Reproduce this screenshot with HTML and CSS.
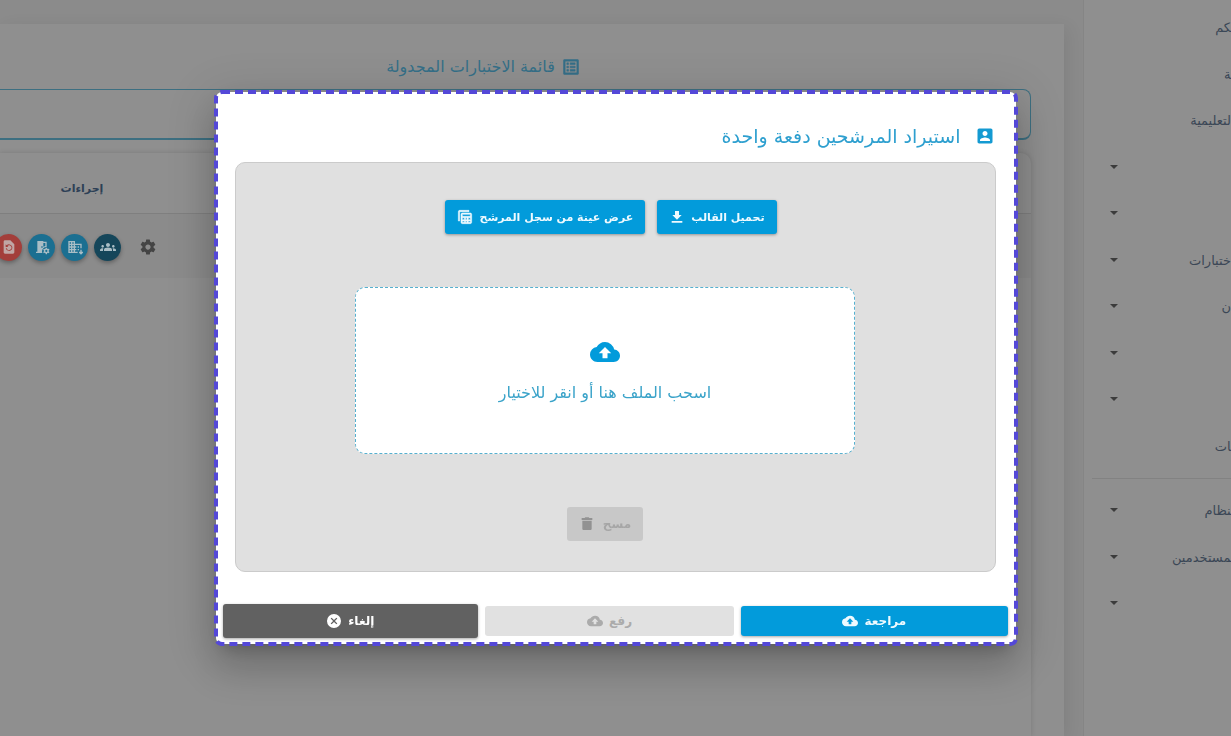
FILE: index.html
```html
<!DOCTYPE html>
<html lang="ar" dir="rtl">
<head>
<meta charset="utf-8">
<title>استيراد المرشحين دفعة واحدة</title>
<link rel="stylesheet" href="styles.css">
</head>
<body>
<div class="page">
  <nav class="sidebar">
    <ul class="menu">
      <li class="menu-item"><a href="#">&zwj;كم</a></li>
      <li class="menu-item"><a href="#">&zwj;ة</a></li>
      <li class="menu-item"><a href="#">لتعليمية</a></li>
      <li class="menu-item"><span class="caret"></span></li>
      <li class="menu-item"><span class="caret"></span></li>
      <li class="menu-item"><a href="#">ختبارات</a><span class="caret"></span></li>
      <li class="menu-item"><a href="#">ن</a><span class="caret"></span></li>
      <li class="menu-item"><span class="caret"></span></li>
      <li class="menu-item"><span class="caret"></span></li>
      <li class="menu-item"><a href="#">&zwj;ات</a></li>
    </ul>
    <ul class="menu menu-system">
      <li class="menu-item"><a href="#">&zwj;نظام</a><span class="caret"></span></li>
      <li class="menu-item"><a href="#">&zwj;مستخدمين</a><span class="caret"></span></li>
      <li class="menu-item"><span class="caret"></span></li>
    </ul>
  </nav>
  <main class="main">
    <section class="card">
      <h1 class="card-title">
        <svg class="icon-20" viewBox="0 0 24 24"><path d="M19 5v14H5V5h14m1.100-2H3.900c-.5 0-.9.4-.9.900v16.200c0 .4.4.9.9.9h16.200c.4 0 .9-.5.9-.9V3.900c0-.5-.5-.9-.9-.9zM11 7h6v2h-6V7zm0 4h6v2h-6v-2zm0 4h6v2h-6v-2zM7 7h2v2H7V7zm0 4h2v2H7v-2zm0 4h2v2H7v-2z" stroke="currentColor" stroke-width=".6"/></svg>
        <span>قائمة الاختبارات المجدولة</span>
      </h1>
      <div class="filter-box"></div>
      <div class="table-card">
        <table class="table">
          <thead><tr><td></td><th class="actions-col" scope="col">إجراءات</th></tr></thead>
          <tbody><tr><td></td><td class="actions-col">
            <div class="actions">
              <button class="round red" aria-label="استعادة"><svg viewBox="0 0 24 24"><path fill-rule="evenodd" d="M14 2H6c-1.100 0-2 .9-2 2v16c0 1.100.9 2 2 2h12c1.100 0 2-.9 2-2V8l-6-6zm-2 16a5 5 0 0 1-4.900-4h1.600a3.500 3.500 0 1 0 .9-3.400L11 12H7V8l1.500 1.500A5 5 0 1 1 12 18z"/></svg></button>
              <button class="round blue" aria-label="القاعة"><svg viewBox="0 0 24 24"><path d="M3 19V21h9.500a6 6 0 0 1-.5-2.500A6.500 6.500 0 0 1 18.500 12H19V4h-5V3H5v16H3zm8-8h2v2h-2v-2zm3-5h3v4.500l-3 1.300V6z"/><path fill-rule="evenodd" d="M17.600 13h1.800l.3 1.400 1.200.7 1.400-.5.9 1.600-1.100 1v1.400l1.100 1-.9 1.600-1.400-.5-1.200.7-.3 1.400h-1.800l-.3-1.400-1.200-.7-1.400.5-.9-1.600 1.100-1v-1.400l-1.100-1 .9-1.600 1.400.5 1.200-.7.300-1.400zm.9 3.300a1.600 1.600 0 1 0 0 3.200 1.600 1.600 0 0 0 0-3.200z"/></svg></button>
              <button class="round blue" aria-label="المركز"><svg viewBox="0 0 24 24"><path fill-rule="evenodd" d="M12 7V3H2v18h14v-2h-4v-2h2v-2h-2v-2h2v-2h-2V9h8v5h2V7H12zM6 19H4v-2h2v2zm0-4H4v-2h2v2zm0-4H4V9h2v2zm0-4H4V5h2v2zm4 12H8v-2h2v2zm0-4H8v-2h2v2zm0-4H8V9h2v2zm0-4H8V5h2v2zm8 4h-2v2h2v-2zm0 4h-2v2h2v-2zm2 1v3h-2v1.500l3 3 3-3V19h-2v-3h-2z"/></svg></button>
              <button class="round navy" aria-label="المرشحون"><svg viewBox="0 0 24 24"><path d="M12 12.750c1.630 0 3.070.390 4.240.9 1.080.480 1.760 1.560 1.760 2.730V18H6v-1.610c0-1.180.680-2.260 1.760-2.730 1.170-.520 2.610-.910 4.240-.910zM4 13c1.100 0 2-.9 2-2s-.9-2-2-2-2 .9-2 2 .9 2 2 2zm1.130 1.100C4.760 14.040 4.390 14 4 14c-.99 0-1.930.210-2.780.580C.480 14.900 0 15.620 0 16.430V18h4.500v-1.610c0-.830.230-1.610.630-2.290zM20 13c1.100 0 2-.9 2-2s-.9-2-2-2-2 .9-2 2 .9 2 2 2zm4 3.430c0-.810-.480-1.530-1.220-1.850A6.950 6.950 0 0 0 20 14c-.390 0-.760.040-1.130.100.4.680.630 1.460.630 2.290V18H24v-1.570zM12 6c1.660 0 3 1.340 3 3s-1.340 3-3 3-3-1.340-3-3 1.340-3 3-3z"/></svg></button>
              <button class="gear" aria-label="الإعدادات"><svg viewBox="0 0 24 24"><path d="M19.430 12.980c.040-.320.070-.640.070-.980s-.030-.660-.070-.980l2.110-1.650c.190-.150.240-.420.120-.640l-2-3.460c-.120-.220-.390-.300-.610-.220l-2.490 1c-.520-.4-1.080-.730-1.690-.980l-.380-2.650A.490.490 0 0 0 14 2h-4c-.250 0-.460.180-.490.420l-.380 2.650c-.610.250-1.170.590-1.690.980l-2.490-1c-.230-.090-.490 0-.610.220l-2 3.460c-.130.220-.070.490.120.640l2.110 1.650c-.040.320-.070.650-.070.980s.030.660.070.980l-2.110 1.650c-.190.150-.240.420-.120.640l2 3.460c.120.220.390.3.610.220l2.490-1c.520.4 1.080.730 1.690.980l.380 2.650c.030.240.240.420.490.420h4c.250 0 .460-.180.490-.420l.380-2.650c.610-.250 1.170-.590 1.690-.980l2.490 1c.230.090.490 0 .610-.220l2-3.460c.120-.220.070-.490-.120-.640l-2.110-1.650zM12 15.500c-1.930 0-3.500-1.570-3.500-3.500s1.570-3.500 3.500-3.500 3.500 1.570 3.500 3.500-1.570 3.500-3.500 3.500z"/></svg></button>
            </div>
          </td></tr></tbody>
        </table>
      </div>
    </section>
  </main>
</div>

<div class="scrim">
  <div class="dialog" role="dialog" aria-modal="true" aria-labelledby="dialog-title">
    <svg class="dialog-outline" aria-hidden="true"><rect width="100%" height="100%" rx="6"/></svg>
    <h2 class="dialog-title">
      <svg class="icon-20" viewBox="0 0 24 24"><path d="M3 5v14c0 1.100.890 2 2 2h14c1.100 0 2-.9 2-2V5c0-1.100-.9-2-2-2H5a2 2 0 0 0-2 2zm12 4c0 1.660-1.340 3-3 3s-3-1.340-3-3 1.340-3 3-3 3 1.340 3 3zm-9 8c0-2 4-3.100 6-3.100s6 1.100 6 3.100v1H6v-1z"/></svg>
      <span id="dialog-title">استيراد المرشحين دفعة واحدة</span>
    </h2>
    <div class="panel">
      <div class="template-buttons">
        <button class="btn primary"><span>تحميل القالب</span><svg class="icon-16" viewBox="0 0 24 24"><path d="M19 9h-4V3H9v6H5l7 7 7-7zM4 18v2.500h16V18H4z"/></svg></button>
        <button class="btn primary"><span>عرض عينة من سجل المرشح</span><svg class="icon-16" viewBox="0 0 24 24"><path fill-rule="evenodd" d="M18 2H4c-1.100 0-2 .9-2 2v14h2V4h14V2zM20 6H8c-1.100 0-2 .9-2 2v12c0 1.100.9 2 2 2h12c1.100 0 2-.9 2-2V8c0-1.100-.9-2-2-2zM8 8h12v3H8V8zm0 5h3v3H8v-3zm5 0h2v3h-2v-3zm4 0h3v3h-3v-3zm-9 5h3v2H8v-2zm5 0h2v2h-2v-2zm4 0h3v2h-3v-2z" stroke="currentColor" stroke-width=".8"/></svg></button>
      </div>
      <button class="dropzone">
        <svg class="icon-30" viewBox="0 0 24 24"><path d="M19.350 10.040A7.490 7.490 0 0 0 12 4C9.110 4 6.600 5.640 5.350 8.040A5.994 5.994 0 0 0 0 14c0 3.310 2.690 6 6 6h13c2.760 0 5-2.240 5-5 0-2.640-2.050-4.780-4.650-4.960zM14 13v4h-4v-4H7l5-5 5 5h-3z"/></svg>
        <span>اسحب الملف هنا أو انقر للاختيار</span>
      </button>
      <button class="btn clear" disabled><span>مسح</span><svg class="icon-16" viewBox="0 0 24 24"><path d="M5 19c0 1.100.9 2 2 2h10c1.100 0 2-.9 2-2V7H5v12zM20 3h-4.500l-1-1h-5l-1 1H4v3h16V3z"/></svg></button>
    </div>
    <div class="footer">
      <button class="btn primary review"><span>مراجعة</span><svg class="icon-16" viewBox="0 0 24 24"><path d="M19.350 10.040A7.490 7.490 0 0 0 12 4C9.110 4 6.600 5.640 5.350 8.040A5.994 5.994 0 0 0 0 14c0 3.310 2.690 6 6 6h13c2.760 0 5-2.240 5-5 0-2.640-2.050-4.780-4.650-4.960zM14 13v4h-4v-4H7l5-5 5 5h-3z"/></svg></button>
      <button class="btn upload" disabled><span>رفع</span><svg class="icon-16" viewBox="0 0 24 24"><path d="M19.350 10.040A7.490 7.490 0 0 0 12 4C9.110 4 6.600 5.640 5.350 8.040A5.994 5.994 0 0 0 0 14c0 3.310 2.690 6 6 6h13c2.760 0 5-2.240 5-5 0-2.640-2.050-4.780-4.650-4.960zM14 13v4h-4v-4H7l5-5 5 5h-3z"/></svg></button>
      <button class="btn cancel"><span>إلغاء</span><svg class="icon-16" viewBox="0 0 24 24"><path d="M12 1.500a10.500 10.500 0 1 0 0 21 10.500 10.500 0 0 0 0-21zM17 15.590 15.590 17 12 13.410 8.410 17 7 15.590 10.590 12 7 8.410 8.410 7 12 10.590 15.590 7 17 8.410 13.410 12 17 15.590z"/></svg></button>
    </div>
  </div>
</div>
</body>
</html>
```

FILE: styles.css
```css
* { box-sizing: border-box; }

body {
  margin: 0;
  overflow: hidden;
  background: #8e8e8e;
  font-family: "DejaVu Sans", sans-serif;
  font-size: 12px;
}

svg { display: block; flex: none; fill: currentColor; }
button { font: inherit; color: inherit; border: 0; padding: 0; }
h1, h2, ul { margin: 0; padding: 0; font-weight: 400; }

.icon-16 { width: 16px; height: 16px; }
.icon-20 { width: 20px; height: 20px; }
.icon-30 { width: 30px; height: 30px; }

.page { display: flex; height: 100vh; }

/* Sidebar */
.sidebar {
  flex: none;
  width: 148px;
  padding-top: 4px;
  border-left: 1px solid #858585;
  background: #8f8f8f;
}
.menu { list-style: none; }
.menu-system {
  margin: 9px 0 0 8px;
  padding-top: 8px;
  border-top: 1px solid #828282;
}
.menu-system .caret { margin-left: 18px; }
.menu-item {
  display: flex;
  align-items: center;
  height: 46px;
  font-size: 13px;
}
.menu-item:nth-child(even) { margin-top: 1px; }
.menu-item a { color: #3b4756; text-decoration: none; white-space: nowrap; }
.caret {
  margin: 0 auto 0 26px;
  border: 4px solid transparent;
  border-top-color: #3c3c3c;
  border-bottom: 0;
}

/* Page content */
.main {
  flex: 1;
  min-width: 0;
  padding: 24px 19px 0 0;
  background: #8b8b8b;
}
.card {
  display: flex;
  flex-direction: column;
  height: 100%;
  padding-right: 33px;
  background: #8f8f8f;
  box-shadow: 4px 4px 16px rgba(0, 0, 0, .08);
}
.card-title {
  display: flex;
  align-items: center;
  justify-content: center;
  gap: 6px;
  height: 65px;
  padding: 20px 64px 0 0;
  color: #356f88;
  font-size: 16px;
}
.filter-box {
  height: 51px;
  border: solid #3d6f81;
  border-width: 1px 1px 2px 0;
  border-radius: 0 8px 8px 0;
}
.table-card {
  flex: 1;
  margin-top: 13px;
  border-radius: 0 10px 0 0;
  box-shadow: 0 0 5px rgba(0, 0, 0, .15);
}
.table { width: 100%; border-collapse: collapse; table-layout: fixed; }
.table td, .table th { padding: 0; height: 60px; }
.table thead tr { border-bottom: 1px solid #7f7f7f; }
.table tbody td { height: 65px; padding-top: 3px; background: #8b8b8b; }
.table .actions-col { width: 164px; }
.table th { padding-top: 12px; font-size: 11px; color: #2d4056; text-align: center; }
.actions {
  direction: ltr;
  display: flex;
  align-items: center;
  gap: 6px;
  margin-left: -5px;
}
.actions svg { width: 16px; height: 16px; }
.round {
  display: grid;
  place-items: center;
  flex: none;
  width: 27px;
  height: 27px;
  border-radius: 50%;
  color: #a9bdc5;
  box-shadow: 0 2px 4px rgba(0, 0, 0, .3);
}
.red { background: #a33e3a; color: #c0a6a4; }
.blue { background: #1b6f91; }
.navy { background: #15465a; }
.gear { margin-left: 12px; background: none; color: #444; }
.gear svg { width: 18px; height: 18px; }

/* Dialog */
.scrim {
  position: fixed;
  inset: 0;
  display: flex;
  align-items: center;
  justify-content: center;
}
.dialog {
  position: relative;
  width: 800px;
  max-width: 100%;
  padding: 0 8px 6px 7px;
  border-radius: 6px;
  background: #fff;
  box-shadow: 0 11px 15px -7px rgba(0, 0, 0, .2), 0 24px 38px 3px rgba(0, 0, 0, .14), 0 9px 46px 8px rgba(0, 0, 0, .12);
}
.dialog-outline {
  position: absolute;
  inset: 0;
  width: 100%;
  height: 100%;
  overflow: visible;
  pointer-events: none;
}
.dialog-outline rect {
  fill: none;
  stroke: #5448d8;
  stroke-width: 4px;
  stroke-dasharray: 8 5;
}
.dialog-title {
  display: flex;
  align-items: center;
  gap: 14px;
  height: 70px;
  padding: 18px 13px 0 0;
  color: #2d9fcf;
  font-size: 19px;
}
.dialog-title svg { color: #149ad2; }
.panel {
  display: flex;
  flex-direction: column;
  align-items: center;
  margin: 0 12px;
  padding: 37px 20px 30px 0;
  border: 1px solid #cbcbcb;
  border-radius: 10px;
  background: #e0e0e0;
}
.template-buttons { display: flex; gap: 12px; padding-left: 12px; }
.btn {
  display: flex;
  align-items: center;
  justify-content: center;
  gap: 6px;
  height: 34px;
  padding: 0 12px;
  border-radius: 3px;
  font-size: 12px;
  font-weight: 700;
  white-space: nowrap;
}
.primary {
  background: #029bdb;
  color: #eefaff;
  box-shadow: 0 1px 3px rgba(0, 0, 0, .35);
}
.template-buttons .btn { font-size: 11px; }
.dropzone {
  display: flex;
  flex-direction: column;
  align-items: center;
  justify-content: center;
  gap: 16px;
  width: 500px;
  max-width: 100%;
  height: 167px;
  margin: 53px 0;
  padding-bottom: 3px;
  border: 1px dashed #56b0cf;
  border-radius: 10px;
  background: #fff;
  color: #3aa3c9;
  font-size: 16px;
}
.dropzone svg { color: #029bdb; }
.clear { gap: 8px; background: #c8c8c8; color: #a6a6a6; }
.clear svg { color: #929292; }
.footer { display: flex; align-items: center; gap: 7px; margin-top: 32px; }
.footer .btn { height: 30px; }
.footer .review { flex: 268 1 0; }
.footer .upload { flex: 249 1 0; background: #e1e1e1; color: #ababab; }
.footer .cancel {
  flex: 256 1 0;
  height: 34px;
  background: #616161;
  color: #fff;
  box-shadow: 0 1px 3px rgba(0, 0, 0, .35);
}
```
